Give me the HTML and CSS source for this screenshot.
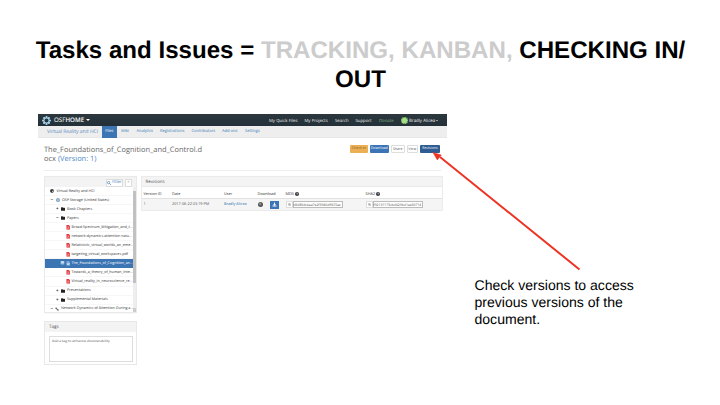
FILE: index.html
```html
<!DOCTYPE html>
<html lang="en">
<head>
<meta charset="utf-8">
<title>Tasks and Issues</title>
<link rel="stylesheet" href="styles.css">
</head>
<body>
<svg class="defs" aria-hidden="true">
  <symbol id="folder" viewBox="0 0 16 14"><path d="M0 2q0-2 2-2h4l2 2h6q2 0 2 2v8q0 2-2 2H2q-2 0-2-2z" fill="currentColor"/></symbol>
  <symbol id="pdf" viewBox="0 0 14 16"><path d="M1 0h8l4 4v12H1z" fill="#e13b42"/><path d="M4 12c3-2 3-5 2-7 0 4 3 5 5 5-3 0-5 1-7 2" fill="none" stroke="#fff" stroke-width="1"/></symbol>
  <symbol id="info" viewBox="0 0 16 16"><circle cx="8" cy="8" r="8" fill="#333"/><path d="M5.500 6q0-2.500 2.500-2.500T10.500 6 8 9v1M8 11v2" fill="none" stroke="#fff" stroke-width="1.800"/></symbol>
  <symbol id="copy" viewBox="0 0 16 16"><path d="M2 2h8v4h4v8H6v-4H2zM6 6h4v4H6z" fill="none" stroke="#666" stroke-width="1.600"/></symbol>
  <symbol id="osf" viewBox="0 0 20 20"><g fill="currentColor"><circle cx="10" cy="2.500" r="2.500"/><circle cx="15.300" cy="4.700" r="2.500"/><circle cx="17.500" cy="10" r="2.500"/><circle cx="15.300" cy="15.300" r="2.500"/><circle cx="10" cy="17.500" r="2.500"/><circle cx="4.700" cy="15.300" r="2.500"/><circle cx="2.500" cy="10" r="2.500"/><circle cx="4.700" cy="4.700" r="2.500"/></g><circle cx="10" cy="10" r="5.500" fill="none" stroke="currentColor" stroke-width="2"/></symbol>
</svg>
<main class="slide">
  <h1 class="heading">Tasks and Issues = <span class="muted">TRACKING, KANBAN,</span> CHECKING IN/<br>OUT</h1>
  <div class="content">
    <section class="app">
      <nav class="topbar">
        <svg class="logo"><use href="#osf"/></svg>
        <span class="brand">OSF<b>HOME</b></span><i class="caret"></i>
        <div class="toplinks">
          <span class="t-quick">My Quick Files</span><span class="t-projects">My Projects</span><span class="t-search">Search</span><span class="t-support">Support</span><span class="t-donate">Donate</span>
          <i class="avatar"></i><span class="t-user">Bradly Alicea</span><i class="caret tiny"></i>
        </div>
      </nav>
      <nav class="subbar">
        <span class="project">Virtual Reality and HCI</span><span class="tab">Files</span><span class="s-wiki">Wiki</span><span class="s-analytics">Analytics</span><span class="s-reg">Registrations</span><span class="s-contrib">Contributors</span><span class="s-addons">Add-ons</span><span class="s-settings">Settings</span>
      </nav>
      <header class="filehead">
        <h2>The_Foundations_of_Cognition_and_Control.d<br>ocx <span>(Version: 1)</span></h2>
        <div class="buttons"><span class="btn check">Check in</span><span class="btn download">Download</span><span class="btn share">Share</span><span class="btn view">View</span><span class="btn revisions">Revisions</span></div>
      </header>
      <div class="columns">
        <aside class="side">
          <div class="files">
            <div class="filter"><span class="filterbtn"><svg viewBox="0 0 10 10"><circle cx="4" cy="4" r="3" fill="none" stroke="currentColor" stroke-width="1.600"/><path d="M6 6l4 4" stroke="currentColor" stroke-width="1.600"/></svg>Filter</span><span class="collapse">×</span></div>
            <div class="treebox">
              <ul class="tree">
                <li class="root"><svg class="ico" viewBox="0 0 16 16"><path d="M8 0l7 3v9l-7 4-7-4V3z" fill="#333"/><path d="M9 8l4-2v5l-4 2z" fill="#fff"/></svg><span>Virtual Reality and HCI</span></li>
                <li class="storage"><i class="tog">−</i><svg class="ico osfico"><use href="#osf"/></svg><span>OSF Storage (United States)</span></li>
                <li class="dir"><i class="tog">+</i><svg class="ico"><use href="#folder"/></svg><span>Book Chapters</span></li>
                <li class="dir"><i class="tog">−</i><svg class="ico"><use href="#folder"/></svg><span>Papers</span></li>
                <li class="file"><svg class="ico"><use href="#pdf"/></svg><span>Broad-Spectrum_Mitigation_and_t...</span></li>
                <li class="file"><svg class="ico"><use href="#pdf"/></svg><span>network-dynamics-attention-natu...</span></li>
                <li class="file"><svg class="ico"><use href="#pdf"/></svg><span>Relativistic_virtual_worlds_an_eme...</span></li>
                <li class="file"><svg class="ico"><use href="#pdf"/></svg><span>targeting_virtual_workspaces.pdf</span></li>
                <li class="file selected"><i class="tog">⊞</i><svg class="ico" viewBox="0 0 14 16"><path d="M1 0h8l4 4v12H1z" fill="#6fa8dc"/><path d="M3 6l2 7 2-5 2 5 2-7" fill="none" stroke="#fff" stroke-width="1.500"/></svg><span>The_Foundations_of_Cognition_an...</span></li>
                <li class="file"><svg class="ico"><use href="#pdf"/></svg><span>Towards_a_theory_of_human_inte...</span></li>
                <li class="file"><svg class="ico"><use href="#pdf"/></svg><span>Virtual_reality_in_neuroscience_re...</span></li>
                <li class="dir"><i class="tog">+</i><svg class="ico"><use href="#folder"/></svg><span>Presentations</span></li>
                <li class="dir"><i class="tog">+</i><svg class="ico"><use href="#folder"/></svg><span>Supplemental Materials</span></li>
                <li class="link"><i class="tog">−</i><svg class="ico" viewBox="0 0 16 16"><path d="M4 4l8 8M2 4l3-2 3 4-3 2zM8 11l3-3 4 4-3 3z" fill="none" stroke="#333" stroke-width="2"/></svg><span>Network Dynamics of Attention During a...</span></li>
              </ul>
              <div class="scroll"><i class="thumb"></i><i class="down"></i></div>
            </div>
          </div>
          <div class="tags"><div class="tagshead">Tags</div><div class="tagbox"><span>Add a tag to enhance discoverability</span></div></div>
        </aside>
        <section class="revs">
          <div class="revhead">Revisions</div>
          <div class="row labels"><span class="c-id">Version ID</span><span class="c-date">Date</span><span class="c-user">User</span><span class="c-down">Download</span><span class="c-md5">MD5<svg><use href="#info"/></svg></span><span class="c-sha">SHA2<svg><use href="#info"/></svg></span></div>
          <div class="row data"><span class="c-id">1</span><span class="c-date">2017-06-22 03:19 PM</span><span class="c-user blue">Bradly Alicea</span><span class="c-down dl"><b class="count">0</b><b class="dlbtn"><svg viewBox="0 0 10 10"><path d="M4 1h2v3h2L5 7 2 4h2zM1 7h8v2H1z" fill="#fff"/></svg></b></span><span class="c-md5 hash"><b class="cp"><svg><use href="#copy"/></svg></b><b class="field">c8d85dcbaa7e2f3940dff470ac</b></span><span class="c-sha hash"><b class="cp"><svg><use href="#copy"/></svg></b><b class="field">f92131175cbd029bd1ae30714</b></span></div>
        </section>
      </div>
    </section>
    <p class="note">Check versions to access<br>previous versions of the<br>document.</p>
  </div>
  <svg class="arrow" viewBox="0 0 720 405"><path d="M440 157L579.500 269.500" stroke="#ed3323" stroke-width="2"/><path d="M433 152.500L441.300 155L437.300 160z" fill="#ed3323" stroke="#ed3323" stroke-width=".5"/></svg>
</main>
</body>
</html>
```
FILE: styles.css
```css
* { box-sizing: border-box; }
body { margin: 0; background: #fff; overflow: hidden; text-rendering: geometricPrecision; }
.defs { display: none; }
svg { display: block; flex: none; }
i, b { font-style: normal; font-weight: inherit; }
.slide { position: relative; width: 720px; height: 405px; padding-top: 36px; font-family: "Liberation Sans", Arial, sans-serif; }
.heading { margin: 0; padding-left: 1px; height: 78px; font-size: 24.100px; line-height: 29px; font-weight: 700; text-align: center; white-space: nowrap; }
.muted { color: #ccc; }
.content { display: flex; padding-left: 38px; }
.app { width: 409px; height: 252px; flex: none; font-family: "Open Sans", sans-serif; font-size: 4px; line-height: 6px; color: #555; white-space: nowrap; }
.topbar { height: 12px; background: linear-gradient(#2c383e, #243039); display: flex; align-items: center; color: #eee; padding-left: 4px; }
.logo { width: 9px; height: 9px; color: #a6d5ee; }
.brand { font-size: 6.200px; margin-left: 3px; width: 31px; color: #fff; }
.brand b { font-weight: 600; }
.caret { border: 2px solid transparent; border-top: 2.500px solid #fff; border-bottom: 0; margin-left: 1px; }
.caret.tiny { border-width: 1.200px 1px 0; margin-left: 0; }
.toplinks { display: flex; align-items: center; margin-left: auto; width: 178px; font-size: 4.300px; }
.toplinks span { padding-top: 1px; }
.t-quick { width: 35.500px; }
.t-projects { width: 30.500px; }
.t-search { width: 20.500px; }
.t-support { width: 23.500px; }
.t-donate { width: 21.500px; color: #7eb37d; }
.avatar { width: 7px; height: 7px; border-radius: 50%; background: #a8db8b; border: 1px dotted #538f3d; margin-right: 1.500px; }
.t-user { width: 26.500px; font-size: 4.400px; }
.subbar { height: 12px; background: #eee; border-bottom: 1px solid #e7e7e7; display: flex; align-items: center; padding: 1px 0 0 9px; color: #3478b4; font-size: 4px; }
.project { width: 54.500px; font-size: 4.950px; color: #5b8abf; }
.tab { width: 15.500px; align-self: stretch; line-height: 12px; margin: -1px 4px -1px 0; background: #3c75b4; color: #fff; text-align: center; }
.s-wiki { width: 15.500px; }
.s-analytics { width: 23.500px; }
.s-reg { width: 31.500px; }
.s-contrib { width: 30.500px; }
.s-addons { width: 23px; }
.filehead { height: 33px; margin: 0 6px; border-bottom: 1px solid #eee; display: flex; justify-content: space-between; padding-top: 7px; }
h2 { margin: 0; padding-top: .6px; font-size: 7.450px; line-height: 9px; font-weight: 400; color: #666; }
h2 span { color: #5288c5; }
.buttons { display: flex; gap: 2px; width: 91px; font-size: 3.600px; }
.btn { height: 8px; border-radius: 1px; line-height: 8px; text-align: center; }
.check { width: 17.500px; background: #edaf53; color: #785a2b; }
.download { width: 19.500px; background: #3b75b8; color: #fff; }
.share, .view { border: 1px solid #ddd; line-height: 7px; }
.share { width: 13.500px; }
.view { width: 11.500px; }
.revisions { width: 20px; background: #2f5c92; color: #fff; }
.columns { display: flex; margin: 5px 4px 0 6px; gap: 4px; align-items: flex-start; }
.side { width: 93px; }
.files { border: 1px solid #e9e9e9; height: 137px; }
.filter { height: 10px; background: #f3f3f3; display: flex; justify-content: flex-end; gap: 2px; padding: 2px 4px 1px; }
.filterbtn, .collapse { border: 1px solid #ddd; background: #fff; height: 8px; line-height: 6px; display: flex; align-items: center; justify-content: center; color: #3b75b4; }
.filterbtn { width: 17px; gap: 1px; }
.filterbtn svg { width: 4px; height: 4px; }
.collapse { width: 7px; color: #888; }
.treebox { display: flex; height: 125px; }
.tree { list-style: none; margin: 0; padding: 0; width: 88px; font-size: 3.700px; color: #333; flex: none; }
.tree li { height: 9.050px; display: flex; align-items: center; border-bottom: 1px solid #f7f7f7; }
.tree span { padding-top: 1px; }
.ico { width: 4px; height: 4px; margin-right: 2px; color: #222; }
.file .ico { width: 4.500px; height: 4.800px; margin-right: 1.500px; }
.tog { width: 3px; margin-right: 2px; font-weight: 700; font-size: 4.500px; color: #333; }
.tree .root { padding-left: 5px; }
.tree .root .ico { margin-right: 2.500px; }
.tree .storage { padding-left: 5.500px; }
.tree .osfico { color: #3d729f; margin-right: 2.500px; }
.tree .dir { padding-left: 11px; }
.tree .file { padding-left: 20.500px; }
.tree .link { padding-left: 5.500px; }
.tree .selected { padding-left: 15.500px; background: #3c75b4; border-color: #3c75b4; color: #fff; }
.selected .tog { color: #dce9f6; }
.scroll { width: 3px; background: #eee; display: flex; flex-direction: column; justify-content: space-between; padding-top: 4px; }
.thumb { height: 92px; background: #c1c1c1; }
.down { height: 4px; background: #ccc; }
.tags { margin-top: 8px; height: 44px; border: 1px solid #e8e8e8; }
.tagshead { height: 10px; padding-left: 4px; background: #f3f3f3; font-size: 4.600px; line-height: 10.500px; }
.tagbox { margin: 3.500px 3.500px 0; height: 26px; border: 1px solid #ddd; padding: 2px 2.500px; font-size: 3.450px; }
.revs { width: 302px; height: 35px; border: 1px solid #ebebeb; }
.revhead { height: 10px; background: #f4f4f4; border-bottom: 1px solid #e9e9e9; font-size: 4.400px; line-height: 10px; padding-left: 3.500px; }
.row { display: flex; align-items: center; padding-left: 1.500px; font-size: 3.800px; }
.labels { height: 12px; padding-top: 4px; border-bottom: 1px solid #e1e1e1; color: #333; }
.data { height: 11px; background: #f5f5f5; }
.row span { flex: none; }
.data .c-id, .data .c-date, .data .c-user { padding-top: 1px; }
.row .c-id { width: 28.500px; }
.row .c-date { width: 52px; }
.row .c-user { width: 33.500px; }
.row .c-down { width: 28px; }
.row .c-md5 { width: 80px; display: flex; align-items: center; }
.row .c-sha { display: flex; align-items: center; }
.labels svg { width: 4px; height: 4px; margin: -1px 0 0 .5px; }
.blue { color: #2e70af; }
.row .dl { display: flex; align-items: center; }
.labels .c-md5, .labels .c-sha { font-size: 3.900px; }
.count { width: 5px; height: 5px; border-radius: 50%; background: #555; color: #fff; font-size: 3px; line-height: 5px; text-align: center; }
.dlbtn { width: 9px; height: 8px; background: #3b75b8; margin-left: 7px; display: grid; place-items: center; }
.dlbtn svg { width: 5px; height: 5px; }
.cp { width: 7px; height: 7px; border: 1px solid #ddd; background: #fff; display: grid; place-items: center; }
.cp svg { width: 3px; height: 3px; }
.field { width: 50px; height: 7px; line-height: 6px; border: 1px solid #bbb; background: #fff; font-size: 3.400px; }
.note { margin: 163px 0 0 27.500px; font-size: 14.050px; line-height: 17.200px; color: #000; white-space: nowrap; }
.arrow { position: absolute; left: 0; top: 0; width: 720px; height: 405px; pointer-events: none; }
```
